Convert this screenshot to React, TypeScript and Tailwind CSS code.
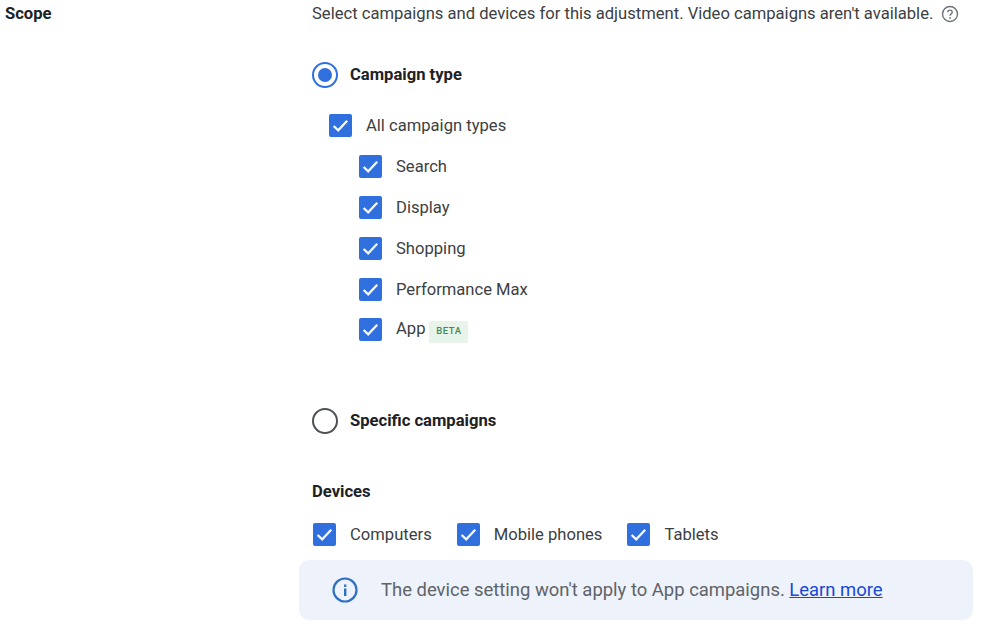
const labelFont = "font-['Roboto',sans-serif]";

function CheckBox() {
  return (
    <span className="flex h-[23px] w-[23px] shrink-0 items-center justify-center rounded-[2px] bg-[#2f6fde]">
      <svg width="19" height="19" viewBox="0 0 19 19" fill="none">
        <path d="M2.6 10 L7.2 14.4 L16.2 4.8" stroke="#f4f8fe" strokeWidth="2.3" />
      </svg>
    </span>
  );
}

function CheckRow({ label, children }: { label: string; children?: React.ReactNode }) {
  return (
    <div className="flex items-center gap-[14px]">
      <CheckBox />
      <span className="text-[16.6px] leading-[23px] text-[#3c4043]">{label}</span>
      {children}
    </div>
  );
}

function Radio({ on, label }: { on: boolean; label: string }) {
  return (
    <div className="flex items-center gap-[12px]">
      {on ? (
        <span className="flex h-[26px] w-[26px] items-center justify-center rounded-full border-[2.5px] border-[#2f6fde]">
          <span className="h-[14px] w-[14px] rounded-full bg-[#2f6fde]" />
        </span>
      ) : (
        <span className="h-[26px] w-[26px] rounded-full border-[2px] border-[#4d5156]" />
      )}
      <span className="text-[16.6px] font-bold leading-[26px] text-[#202124]">{label}</span>
    </div>
  );
}

export default function App() {
  return (
    <div className={`flex h-[639px] w-[982px] overflow-hidden bg-white ${labelFont}`}>
      <div className="w-[312px] pl-[5px] pt-[3px] text-[16.6px] font-bold leading-[22px] text-[#202124]">Scope</div>
      <div className="flex w-[670px] flex-col pt-[3px]">
        <div className="flex items-center gap-[8px] text-[16.6px] leading-[22px] text-[#3c4043]">
          <span className="whitespace-nowrap">Select campaigns and devices for this adjustment. Video campaigns aren't available.</span>
          <svg width="18" height="18" viewBox="0 0 18 18" fill="none">
            <circle cx="9" cy="9" r="7.5" stroke="#6f7377" strokeWidth="1.4" />
            <path d="M6.8 7.2 C6.8 4.4 11.2 4.4 11.2 7.2 C11.2 8.9 9 8.9 9 10.8" stroke="#6f7377" strokeWidth="1.4" />
            <circle cx="9" cy="13" r="0.9" fill="#6f7377" />
          </svg>
        </div>

        <div className="mt-[37px]">
          <Radio on label="Campaign type" />
        </div>

        <div className="ml-[17px] mt-[26px]">
          <CheckRow label="All campaign types" />
          <div className="ml-[30px] mt-[18px] flex flex-col gap-[18px]">
            <CheckRow label="Search" />
            <CheckRow label="Display" />
            <CheckRow label="Shopping" />
            <CheckRow label="Performance Max" />
            <div className="-mt-[1px] flex items-center gap-[14px]">
              <CheckBox />
              <span className="-translate-y-[1px] text-[16.6px] leading-[23px] text-[#3c4043]">App</span>
              <span className="-my-[2px] -ml-[10px] flex h-[22px] w-[39px] translate-y-[2px] items-center justify-center rounded-[2px] bg-[#e8f4ea] text-[9.5px] font-medium tracking-[0.6px] text-[#3f8a4f]">
                BETA
              </span>
            </div>
          </div>
        </div>

        <div className="mt-[67px]">
          <Radio on={false} label="Specific campaigns" />
        </div>

        <div className="mt-[47px] text-[16.6px] font-bold leading-[22px] text-[#202124]">Devices</div>

        <div className="ml-[1px] mt-[20px] flex items-center gap-[25px]">
          <CheckRow label="Computers" />
          <CheckRow label="Mobile phones" />
          <CheckRow label="Tablets" />
        </div>

        <div className="-ml-[13px] mt-[14px] flex h-[60px] w-[674px] items-center gap-[23px] rounded-[10px] bg-[#edf2fb] pl-[33px]">
          <svg width="26" height="26" viewBox="0 0 26 26" fill="none">
            <circle cx="13" cy="13" r="11.5" stroke="#2f6fc4" strokeWidth="2.2" />
            <rect x="12" y="11.5" width="2.4" height="7.5" fill="#2f6fc4" />
            <rect x="12" y="7.5" width="2.4" height="2.4" fill="#2f6fc4" />
          </svg>
          <span className="text-[18.45px] leading-[24px] text-[#5f6368]">
            The device setting won't apply to App campaigns.{" "}
            <a className="text-[#1a47d6] underline">Learn more</a>
          </span>
        </div>
      </div>
    </div>
  );
}
